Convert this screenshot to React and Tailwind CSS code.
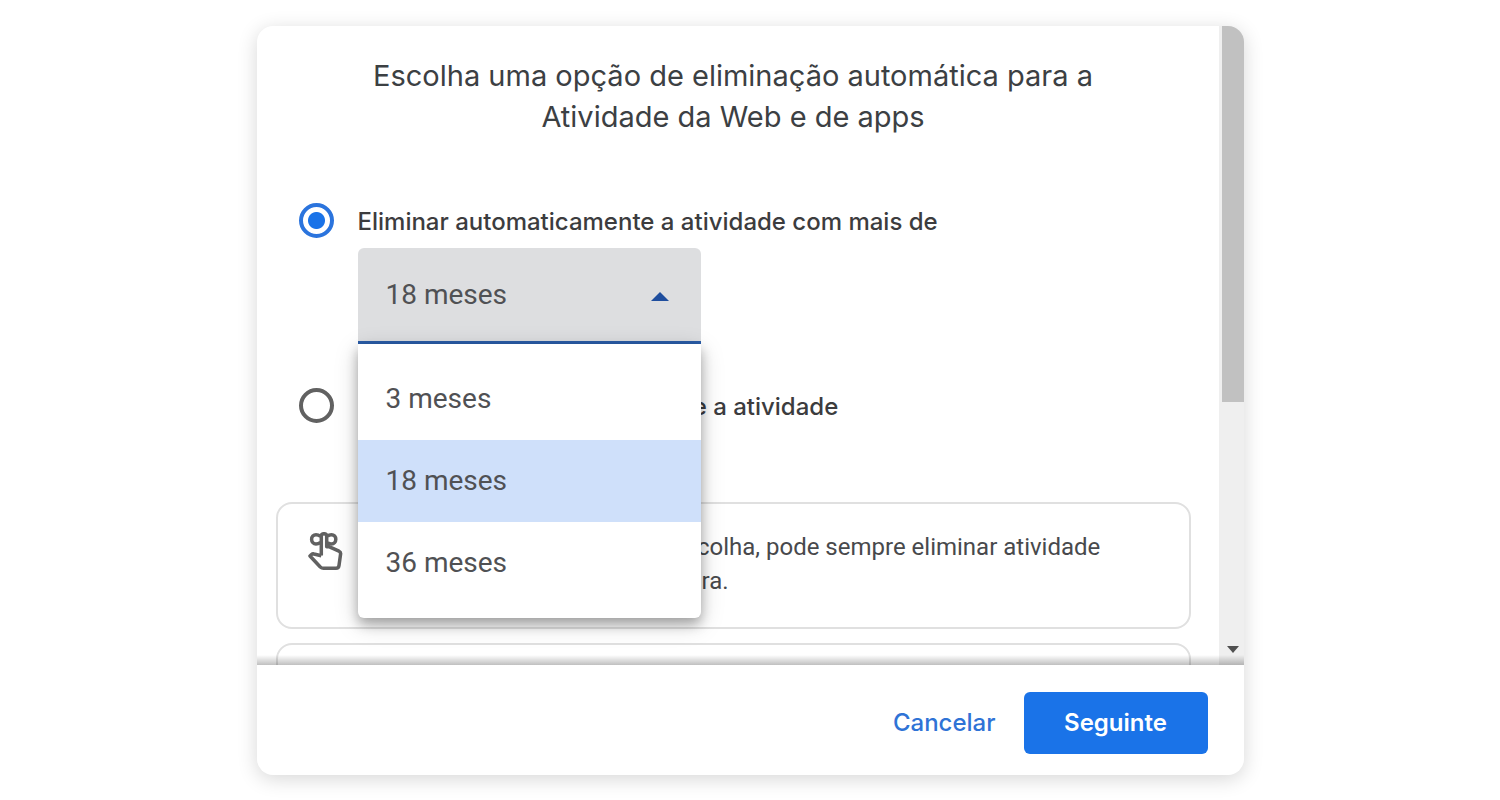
import { useState } from "react";

const OPTIONS = ["3 meses", "18 meses", "36 meses"];

// Finger with a ribbon tied around it
function ReminderIcon() {
  return (
    <svg className="mt-0.5" width="36" height="40" viewBox="0 0 36 40" fill="none" stroke="#616161" strokeWidth="3.5" strokeLinejoin="round" aria-hidden="true">
      <path d="M12.5 4.2C11 3.2 9.5 2.700 8 2.700C5.500 2.700 3.600 4.700 3.600 7.300C3.600 9.900 5.500 12 8 12C9.500 12 11 11.500 12.500 10.500" />
      <path d="M19.500 4.200C20.500 3.200 22 2.700 23.500 2.700C26 2.700 27.800 4.700 27.800 7.300C27.800 9.900 26 12 23.500 12C22 12 20.500 11.500 19.500 10.500" />
      <path d="M13.300 23.500V4.300C13.300 2.700 14.400 1.700 16 1.700C17.600 1.700 18.700 2.700 18.700 4.300V14.800H21.500L31 19.200C32.200 19.800 32.800 20.700 32.600 22L31 33.500C30.700 35.500 29.700 36.300 28 36.300H15.500C14 36.300 13.300 35.900 12.300 35L2 24L3.500 22.500C4.200 21.900 5 21.700 6 22L13.300 23.800" />
    </svg>
  );
}

function PeriodSelect({ value, onChange }) {
  return (
    <div className="relative w-[343px]">
      <select
        aria-label="Período"
        value={value}
        onChange={(e) => onChange(e.target.value)}
        className="block h-24 w-full appearance-none rounded-t-md border-b-3 border-[#2a5da8] bg-[#dddee0] px-7 font-[Roboto,sans-serif] text-[28px] text-[#505154] outline-none"
      >
        {OPTIONS.map((option) => (
          <option key={option}>{option}</option>
        ))}
      </select>
      <svg className="pointer-events-none absolute top-11 right-8" width="18" height="9" viewBox="0 0 18 9" aria-hidden="true">
        <path d="M0 9L9 0L18 9Z" fill="#1f4e9e" />
      </svg>
      <ul className="absolute top-full left-0 z-10 w-full rounded-b-md bg-white py-3.5 font-[Roboto,sans-serif] text-[28px] text-[#505154] shadow-[0_6px_12px_rgba(0,0,0,0.28),0_6px_24px_rgba(0,0,0,0.18)]">
        {OPTIONS.map((option) => (
          <li key={option}>
            <button
              type="button"
              onClick={() => onChange(option)}
              className={`flex h-[82px] w-full items-center px-7 ${option === value ? "bg-[#cfe0fa]" : ""}`}
            >
              {option}
            </button>
          </li>
        ))}
      </ul>
    </div>
  );
}

function RadioOption({ id, checked, onChange, label, children }) {
  return (
    <div className="flex items-start gap-6">
      <input
        type="radio"
        id={id}
        name="auto-delete"
        checked={checked}
        onChange={onChange}
        className="size-[35px] shrink-0 appearance-none rounded-full border-4 border-[#616161] checked:border-[#2b74dd] checked:bg-[radial-gradient(circle,#1a73e8_8px,transparent_9px)]"
      />
      <div>
        <label htmlFor={id} className="block h-[45px] text-[24px] leading-[38px] font-medium whitespace-nowrap text-[#3c3c3e]">
          {label}
        </label>
        {children}
      </div>
    </div>
  );
}

function App() {
  const [mode, setMode] = useState("auto");
  const [period, setPeriod] = useState("18 meses");

  return (
    <div className="flex h-screen justify-center bg-white px-6 pt-[26px] pb-[25px] font-[Inter,sans-serif]">
      <div role="dialog" aria-labelledby="title" className="flex w-full max-w-[987px] flex-col overflow-hidden rounded-2xl bg-white shadow-[0_4px_20px_rgba(0,0,0,0.16)]">
        <div className="relative flex min-h-0 flex-1">
          <div className="min-w-0 flex-1 overflow-hidden pt-[29px] pr-7 pl-[19px]">
            <h1 id="title" className="mx-auto max-w-[800px] text-center text-[29px] leading-[41px] text-[#3c4043]">
              Escolha uma opção de eliminação automática para a Atividade da Web e de apps
            </h1>

            <div className="mt-[66px] flex flex-col gap-[44px] pl-[23px]">
              <RadioOption
                id="auto"
                checked={mode === "auto"}
                onChange={() => setMode("auto")}
                label="Eliminar automaticamente a atividade com mais de"
              >
                <PeriodSelect value={period} onChange={setPeriod} />
              </RadioOption>
              <RadioOption
                id="manual"
                checked={mode === "manual"}
                onChange={() => setMode("manual")}
                label="Não eliminar automaticamente a atividade"
              />
            </div>

            <div className="mt-[69px] flex h-[127px] gap-8 rounded-2xl border-2 border-[#e0e0e0] px-[30px] pt-[26px]">
              <ReminderIcon />
              <p className="font-[Roboto,sans-serif] text-[24px] leading-[34px] whitespace-nowrap text-[#48494c]">
                Independentemente da sua escolha, pode sempre eliminar atividade
                <br />
                manualmente e de forma segura.
              </p>
            </div>
            <div className="mt-3.5 h-[127px] rounded-2xl border-2 border-[#e0e0e0]" />
          </div>

          {/* Scrollbar */}
          <div className="flex w-[25px] shrink-0 flex-col items-end justify-between bg-[#efefef] pb-3">
            <div className="h-3/5 w-[22px] bg-[#c1c1c1]" />
            <svg className="mr-[5px]" width="12" height="7" viewBox="0 0 12 7" aria-hidden="true">
              <path d="M0 0H12L6 7Z" fill="#505050" />
            </svg>
          </div>
          <div className="pointer-events-none absolute inset-x-0 bottom-0 h-2.5 bg-linear-to-b from-transparent to-black/25" />
        </div>

        <div className="flex h-[110px] shrink-0 items-center justify-end gap-7 pt-1.5 pr-9 text-[24px] font-medium">
          <button type="button" className="text-[#2f73d6]">Cancelar</button>
          <button type="button" className="h-[62px] w-[184px] rounded-md bg-[#1a73e8] font-semibold text-white">Seguinte</button>
        </div>
      </div>
    </div>
  );
}

export default App;
